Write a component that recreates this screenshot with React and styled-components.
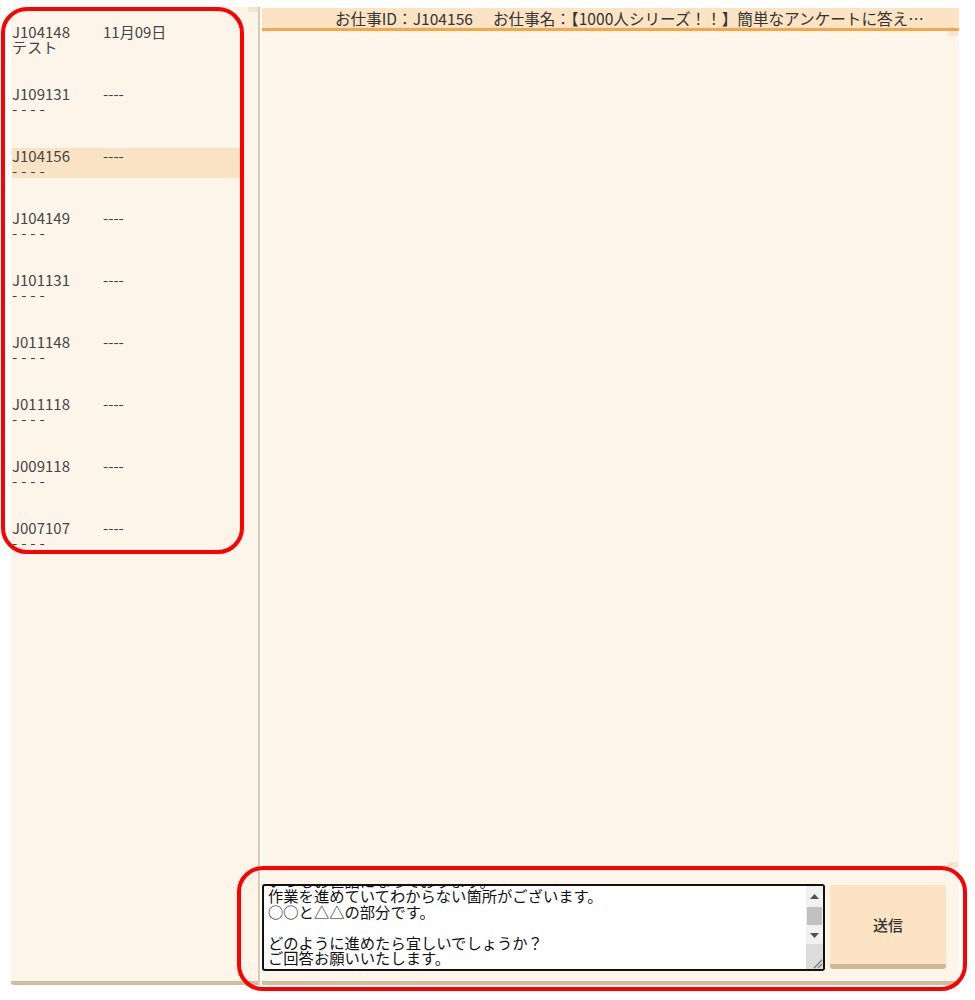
import React, { useEffect, useRef } from "react";
import styled, { createGlobalStyle } from "styled-components";

const Global = createGlobalStyle`
  html, body { margin: 0; padding: 0; background: #ffffff; }
  body { font-family: "Noto Sans CJK JP", "Noto Sans", sans-serif; }
`;

const Page = styled.div`
  position: relative;
  width: 975px;
  height: 1000px;
  box-sizing: border-box;
  padding: 7px 0 0 11px;
  display: flex;
  align-items: flex-start;
`;

const Sidebar = styled.aside`
  position: relative;
  width: 249px;
  height: 978px;
  box-sizing: border-box;
  background: #fdf5ea;
  border-right: 2px solid #dccbb0;
  border-bottom: 4px solid #d3bc9b;
  border-radius: 0 0 0 3px;
  padding: 17px 15px 0 1px;
  display: flex;
  flex-direction: column;
  gap: 32px;
`;

const Corner = styled.div`
  position: absolute;
  top: 0;
  right: 0;
  width: 10px;
  height: 5px;
  background: #f7e6cf;
`;

const Item = styled.div`
  display: grid;
  grid-template-columns: 91px 1fr;
  height: 30px;
  font-size: 15px;
  line-height: 15px;
  color: #444;
  background: ${(p) => (p.$active ? "#fae3c4" : "transparent")};
`;

const Cell = styled.span`
  white-space: nowrap;
  letter-spacing: ${(p) => (p.$spaced ? "0.3px" : "0")};
`;

const Main = styled.main`
  width: 697px;
  height: 977px;
  margin-left: 2px;
  margin-top: 1px;
  box-sizing: border-box;
  background: #fdf5ea;
  border-bottom: 4px solid #d3bc9b;
  display: flex;
  flex-direction: column;
`;

const Header = styled.header`
  height: 20px;
  background: #fbe3c3;
  border-bottom: 3px solid #f7a547;
  box-sizing: content-box;
  padding-left: 73px;
  display: flex;
  align-items: center;
  font-size: 15.6px;
  color: #333;
  white-space: nowrap;
  overflow: hidden;
`;

const HeaderPart = styled.span`
  margin-right: ${(p) => p.$gap || 0}px;
`;

const Messages = styled.div`
  position: relative;
  flex: 1;
`;

const TrackStub = styled.div`
  position: absolute;
  right: 1px;
  ${(p) => (p.$bottom ? "bottom: 0;" : "top: 0;")}
  width: 10px;
  height: 5px;
  background: #f7e6cf;
`;

const Composer = styled.div`
  display: flex;
  align-items: flex-start;
  gap: 5px;
  padding: 17px 13px 10px 0;
`;

const InputWrap = styled.div`
  position: relative;
  width: 563px;
  height: 87px;
`;

const Input = styled.textarea`
  display: block;
  width: 100%;
  height: 100%;
  box-sizing: border-box;
  border: 2px solid #111;
  border-radius: 3px;
  padding: 0 21px 0 4px;
  margin: 0;
  resize: none;
  overflow: hidden;
  font-family: "Noto Sans CJK JP", sans-serif;
  font-size: 15.3px;
  line-height: 15.5px;
  color: #111;
  background: #fff;
  outline: none;
`;

const ScrollBar = styled.div`
  position: absolute;
  top: 2px;
  right: 2px;
  bottom: 2px;
  width: 17px;
  display: flex;
  flex-direction: column;
  background: #f1f1f1;
  pointer-events: none;
`;

const ScrollBtn = styled.div`
  height: ${(p) => p.$h}px;
  display: flex;
  align-items: center;
  justify-content: center;
  flex: none;
`;

const ScrollTrack = styled.div`
  flex: none;
  height: 20px;
  box-sizing: border-box;
  padding: 1px 1px 0;
`;

const ScrollThumb = styled.div`
  height: 18px;
  background: #c1c1c1;
`;

const ScrollCorner = styled.div`
  flex: 1;
  background: #dcdcdc;
  display: flex;
  align-items: flex-end;
  justify-content: flex-end;
`;

const SendButton = styled.button`
  width: 116px;
  height: 84px;
  margin-top: 1px;
  box-sizing: border-box;
  border: none;
  border-bottom: 5px solid #d2b995;
  border-radius: 3px;
  background: #fbe3c3;
  font-family: "Noto Sans CJK JP", sans-serif;
  font-size: 15px;
  font-weight: 500;
  color: #333;
  cursor: pointer;
`;

const Annotation = styled.div`
  position: absolute;
  left: ${(p) => p.$x}px;
  top: ${(p) => p.$y}px;
  width: ${(p) => p.$w}px;
  height: ${(p) => p.$h}px;
  box-sizing: border-box;
  border: 4px solid #ff0000;
  border-radius: 26px;
  pointer-events: none;
`;

const items = [
  { id: "J104148", date: "11月09日", sub: "テスト" },
  { id: "J109131", date: "----", sub: "- - - -" },
  { id: "J104156", date: "----", sub: "- - - -", active: true },
  { id: "J104149", date: "----", sub: "- - - -" },
  { id: "J101131", date: "----", sub: "- - - -" },
  { id: "J011148", date: "----", sub: "- - - -" },
  { id: "J011118", date: "----", sub: "- - - -" },
  { id: "J009118", date: "----", sub: "- - - -" },
  { id: "J007107", date: "----", sub: "- - - -" },
];

const message =
  "〇〇様\nいつもお世話になっております。\n作業を進めていてわからない箇所がございます。\n○○と△△の部分です。\n\nどのように進めたら宜しいでしょうか？\nご回答お願いいたします。\n\n";

const Arrow = ({ down }) => (
  <svg width="9" height="5" viewBox="0 0 9 5">
    <path d={down ? "M0 0 H9 L4.5 5 Z" : "M0 5 H9 L4.5 0 Z"} fill="#505050" />
  </svg>
);

const Grip = () => (
  <svg width="12" height="12" viewBox="0 0 12 12">
    <path d="M11 3 L3 11 M11 7 L7 11" stroke="#777" strokeWidth="1.2" />
  </svg>
);

export default function App() {
  const ref = useRef(null);
  useEffect(() => {
    if (ref.current) ref.current.scrollTop = 29;
  }, []);
  return (
    <>
      <Global />
      <Page>
        <Sidebar>
          <Corner />
          {items.map((it) => (
            <Item key={it.id} $active={it.active}>
              <Cell>{it.id}</Cell>
              <Cell>{it.date}</Cell>
              <Cell $spaced>{it.sub}</Cell>
            </Item>
          ))}
        </Sidebar>
        <Main>
          <Header>
            <HeaderPart $gap={20}>お仕事ID：J104156</HeaderPart>
            <HeaderPart>お仕事名：【1000人シリーズ！！】簡単なアンケートに答え…</HeaderPart>
          </Header>
          <Messages>
            <TrackStub />
            <TrackStub $bottom />
          </Messages>
          <Composer>
            <InputWrap>
              <Input ref={ref} defaultValue={message} />
              <ScrollBar>
                <ScrollBtn $h={20}>
                  <Arrow />
                </ScrollBtn>
                <ScrollTrack>
                  <ScrollThumb />
                </ScrollTrack>
                <ScrollBtn $h={18}>
                  <Arrow down />
                </ScrollBtn>
                <ScrollCorner>
                  <Grip />
                </ScrollCorner>
              </ScrollBar>
            </InputWrap>
            <SendButton>送信</SendButton>
          </Composer>
        </Main>
        <Annotation $x={1} $y={7} $w={243} $h={547} />
        <Annotation $x={237} $y={866} $w={730} $h={125} />
      </Page>
    </>
  );
}
